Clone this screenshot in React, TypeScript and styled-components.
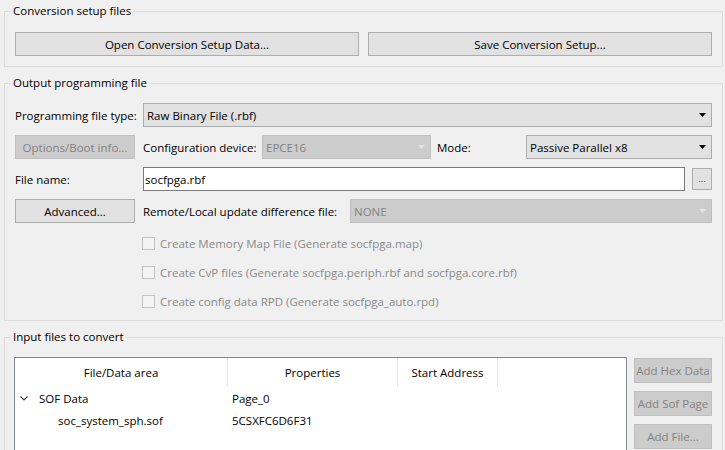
import React from "react";
import styled, { createGlobalStyle } from "styled-components";

const Global = createGlobalStyle`
  html, body { margin: 0; padding: 0; background: #f0f0f0; }
  body { font-family: "Open Sans", "Noto Sans", sans-serif; font-size: 11.5px; color: #000; overflow: hidden; }
  * { box-sizing: border-box; }
`;

const Page = styled.div`
  width: 725px;
  padding-top: 3px;
`;

const Group = styled.fieldset<{ $pb?: number; $pt?: number }>`
  margin: 0 2px 8px 4px;
  border: 1px solid #dcdcdc;
  padding: ${(p) => p.$pt ?? 12}px 10px ${(p) => p.$pb ?? 8}px 10px;
  min-width: 0;
`;

const Legend = styled.legend`
  padding: 0 2px;
  margin-left: -4px;
  line-height: 16px;
  font-size: 11.5px;
`;

const TwoCols = styled.div`
  display: grid;
  grid-template-columns: 1fr 1fr;
  gap: 9px;
`;

const Button = styled.button<{ $disabled?: boolean; $h?: number }>`
  width: 100%;
  height: ${(p) => p.$h ?? 24}px;
  margin: 0;
  padding: 0 4px;
  font: inherit;
  color: ${(p) => (p.$disabled ? "#838383" : "#000")};
  background: ${(p) => (p.$disabled ? "#cccccc" : "#e1e1e1")};
  border: 1px solid ${(p) => (p.$disabled ? "#bfbfbf" : "#adadad")};
  white-space: nowrap;
  display: flex;
  align-items: center;
  justify-content: center;
`;

const FormGrid = styled.div`
  display: grid;
  grid-template-columns: 120px 1fr;
  column-gap: 8px;
  row-gap: 8px;
`;

const Label = styled.span<{ $w?: number; $indent?: number }>`
  display: flex;
  align-items: center;
  height: 24px;
  white-space: nowrap;
  flex: none;
  ${(p) => (p.$w ? `width: ${p.$w}px;` : "")}
  padding-left: ${(p) => p.$indent ?? 0}px;
`;

const Line = styled.div`
  display: flex;
  align-items: center;
  min-width: 0;
`;

const Combo = styled.div<{ $disabled?: boolean; $w?: number }>`
  position: relative;
  height: 24px;
  display: flex;
  align-items: center;
  padding-left: 3px;
  ${(p) => (p.$w ? `width: ${p.$w}px; flex: none;` : "flex: 1;")}
  background: ${(p) => (p.$disabled ? "#cccccc" : "#e1e1e1")};
  border: 1px solid ${(p) => (p.$disabled ? "#bfbfbf" : "#adadad")};
  color: ${(p) => (p.$disabled ? "#838383" : "#000")};
  white-space: nowrap;
`;

const Arrow = styled.svg`
  position: absolute;
  right: 5px;
  top: 50%;
  margin-top: -2px;
`;

const ComboBox = ({ value, disabled, w }: { value: string; disabled?: boolean; w?: number }) => (
  <Combo $disabled={disabled} $w={w}>
    <span>{value}</span>
    <Arrow width="7" height="4" viewBox="0 0 7 4">
      <path d="M0 0H7L3.5 4Z" fill={disabled ? "#e4e4e4" : "#000"} />
    </Arrow>
  </Combo>
);

const TextInput = styled.div`
  flex: 1;
  height: 24px;
  background: #fff;
  border: 1px solid #7a7a7a;
  display: flex;
  align-items: center;
  padding-left: 1px;
`;

const Browse = styled.button`
  width: 20px;
  height: 22px;
  margin: 0 0 0 7px;
  padding: 0 0 4px;
  font: inherit;
  font-size: 9px;
  background: #e1e1e1;
  border: 1px solid #adadad;
  display: flex;
  align-items: flex-end;
  justify-content: center;
  color: #203080;
`;

const ChecksList = styled.div`
  grid-column: 2;
  display: flex;
  flex-direction: column;
  gap: 7px;
  margin-top: 1px;
`;

const CheckRow = styled.label`
  display: flex;
  align-items: center;
  height: 22px;
  gap: 5px;
  color: #8a8a8a;
  white-space: nowrap;
`;

const Box = styled.span`
  width: 13px;
  height: 13px;
  border: 1px solid #c4c4c4;
  background: #f4f4f4;
  flex: none;
  margin-left: -1px;
`;

const InputArea = styled.div`
  display: flex;
  gap: 7px;
  margin-left: -1px;
`;

const Table = styled.div`
  width: 613px;
  height: 140px;
  background: #fff;
  border: 1px solid #828790;
  flex: none;
`;

const HeadRow = styled.div`
  display: grid;
  grid-template-columns: 213px 170px 100px 1fr;
  height: 28px;
  margin-bottom: 1px;
`;

const HeadCell = styled.div<{ $last?: boolean }>`
  display: flex;
  align-items: center;
  justify-content: center;
  border-right: ${(p) => (p.$last ? "none" : "1px solid #e5e5e5")};
`;

const BodyRow = styled.div`
  display: grid;
  grid-template-columns: 213px 170px 100px 1fr;
  height: 22px;
  align-items: center;
`;

const NameCell = styled.div<{ $indent: number }>`
  display: flex;
  align-items: center;
  padding-left: ${(p) => p.$indent}px;
  white-space: nowrap;
`;

const Chevron = styled.svg`
  margin-right: 11px;
  flex: none;
`;

const ValueCell = styled.div`
  padding-left: 4px;
  white-space: nowrap;
`;

const SideButtons = styled.div`
  display: flex;
  flex-direction: column;
  gap: 8px;
  width: 78px;
  margin-top: 1px;
`;

export default function App() {
  return (
    <Page>
      <Global />
      <Group $pt={13} $pb={10}>
        <Legend>Conversion setup files</Legend>
        <TwoCols>
          <Button>Open Conversion Setup Data...</Button>
          <Button>Save Conversion Setup...</Button>
        </TwoCols>
      </Group>

      <Group $pt={12} $pb={8}>
        <Legend>Output programming file</Legend>
        <FormGrid>
          <Label>Programming file type:</Label>
          <Line>
            <ComboBox value="Raw Binary File (.rbf)" />
          </Line>

          <Button $disabled>Options/Boot info...</Button>
          <Line>
            <Label $w={119}>Configuration device:</Label>
            <ComboBox value="EPCE16" disabled w={169} />
            <Label $w={95} $indent={6}>Mode:</Label>
            <ComboBox value="Passive Parallel x8" />
          </Line>

          <Label>File name:</Label>
          <Line>
            <TextInput>socfpga.rbf</TextInput>
            <Browse>...</Browse>
          </Line>

          <Button>Advanced...</Button>
          <Line>
            <Label $w={207}>Remote/Local update difference file:</Label>
            <ComboBox value="NONE" disabled />
          </Line>

          <ChecksList>
            <CheckRow>
              <Box />
              Create Memory Map File (Generate socfpga.map)
            </CheckRow>
            <CheckRow>
              <Box />
              Create CvP files (Generate socfpga.periph.rbf and socfpga.core.rbf)
            </CheckRow>
            <CheckRow>
              <Box />
              Create config data RPD (Generate socfpga_auto.rpd)
            </CheckRow>
          </ChecksList>
        </FormGrid>
      </Group>

      <Group $pt={12} $pb={8}>
        <Legend>Input files to convert</Legend>
        <InputArea>
          <Table>
            <HeadRow>
              <HeadCell>File/Data area</HeadCell>
              <HeadCell>Properties</HeadCell>
              <HeadCell>Start Address</HeadCell>
              <HeadCell $last />
            </HeadRow>
            <BodyRow>
              <NameCell $indent={5}>
                <Chevron width="8" height="5" viewBox="0 0 8 5">
                  <path d="M0.5 0.5L4 4L7.5 0.5" fill="none" stroke="#444" strokeWidth="1.2" />
                </Chevron>
                SOF Data
              </NameCell>
              <ValueCell>Page_0</ValueCell>
            </BodyRow>
            <BodyRow>
              <NameCell $indent={43}>soc_system_sph.sof</NameCell>
              <ValueCell>5CSXFC6D6F31</ValueCell>
            </BodyRow>
          </Table>
          <SideButtons>
            <Button $disabled $h={25}>Add Hex Data</Button>
            <Button $disabled $h={25}>Add Sof Page</Button>
            <Button $disabled $h={25}>Add File...</Button>
          </SideButtons>
        </InputArea>
      </Group>
    </Page>
  );
}
